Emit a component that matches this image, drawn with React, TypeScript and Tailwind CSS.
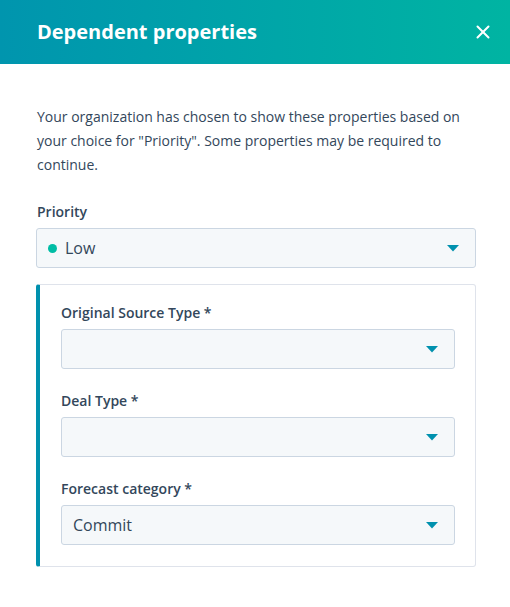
import { X } from "lucide-react";

const font = { fontFamily: '"Open Sans", "Noto Sans", sans-serif' };

const Caret = () => (
  <svg width="12" height="7" viewBox="0 0 12 7" className="shrink-0">
    <path d="M0 0h12L6 6.5z" fill="#0091ae" />
  </svg>
);

type SelectProps = { value?: string; dot?: boolean };

const Select = ({ value, dot }: SelectProps) => (
  <div className="flex h-10 items-center rounded-[3px] border border-[#cbd6e2] bg-[#f5f8fa] pl-[11px] pr-4">
    {dot && <span className="mr-[8px] h-[9px] w-[9px] rounded-full bg-[#00bda5]" />}
    <span className="flex-1 text-[16px] text-[#33475b]">{value}</span>
    <Caret />
  </div>
);

const Field = ({ label, value }: { label: string; value?: string }) => (
  <div className="flex flex-col">
    <label className="mb-[7px] text-[14px] font-semibold leading-[18px] text-[#33475b]">{label}</label>
    <Select value={value} />
  </div>
);

export default function App() {
  return (
    <div className="min-h-screen w-[510px] bg-white" style={font}>
      <header className="flex h-16 items-center justify-between bg-gradient-to-r from-[#0095ae] to-[#00b4a2] pl-[37px] pr-4">
        <h1 className="text-[20px] font-bold text-white">Dependent properties</h1>
        <button className="text-white">
          <X className="h-[22px] w-[22px]" strokeWidth={2.2} />
        </button>
      </header>

      <main className="pl-9 pr-[34px] pt-[41px]">
        <p className="pl-px text-[14px] leading-[24px] text-[#33475b]">
          Your organization has chosen to show these properties based on your choice for "Priority". Some properties may be required to continue.
        </p>

        <div className="mt-[26px] flex flex-col pl-px">
          <label className="mb-[7px] text-[14px] font-semibold leading-[18px] text-[#33475b]">Priority</label>
        </div>
        <Select value="Low" dot />

        <div className="mt-4 flex flex-col gap-[23px] rounded-[3px] border border-l-4 border-[#dfe3eb] border-l-[#0091ae] pb-[21px] pl-[21px] pr-5 pt-[19px]">
          <Field label="Original Source Type *" />
          <Field label="Deal Type *" />
          <Field label="Forecast category *" value="Commit" />
        </div>
      </main>
    </div>
  );
}
